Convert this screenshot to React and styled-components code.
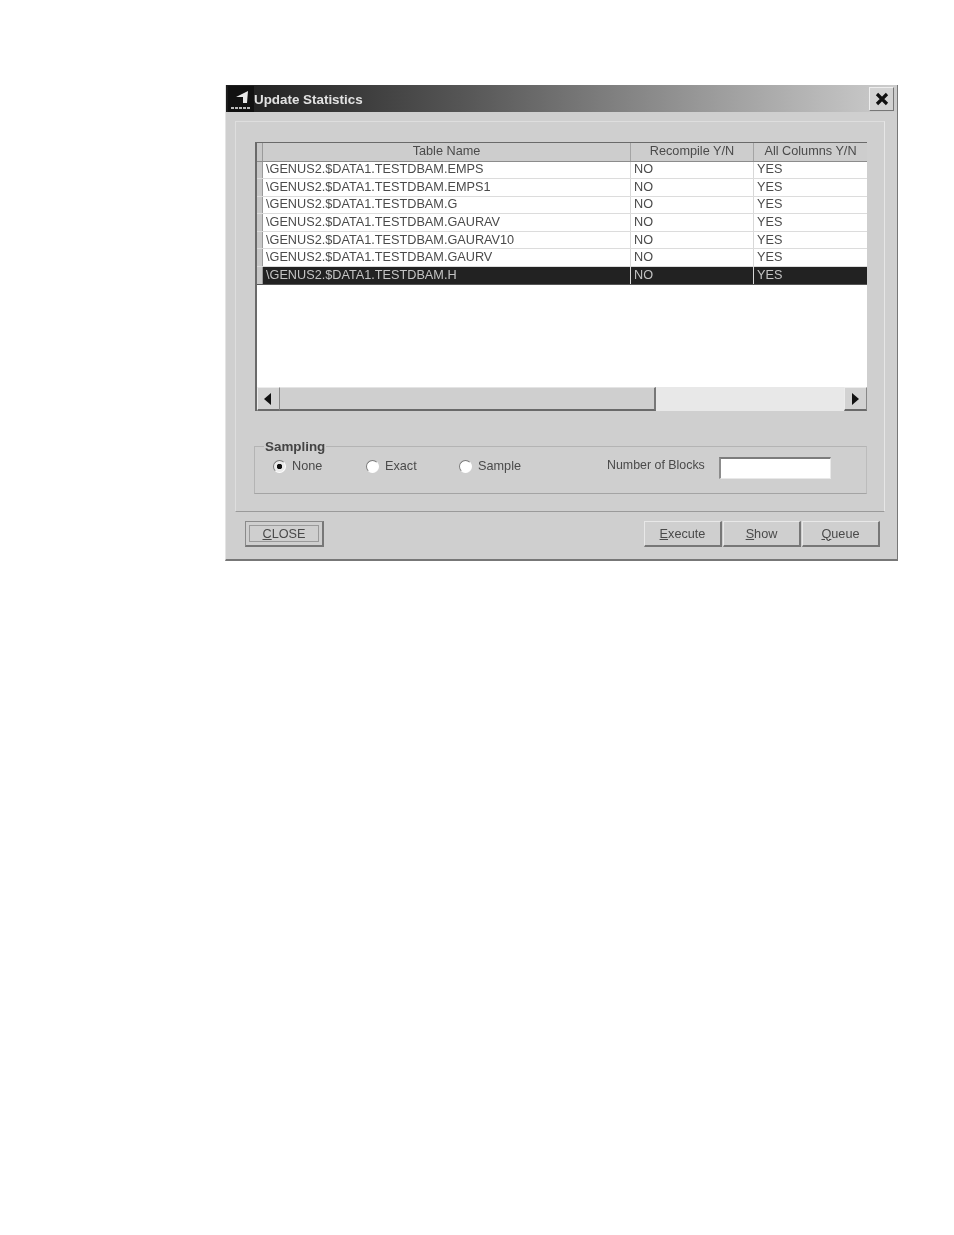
import React from "react";
import styled, {createGlobalStyle} from "styled-components";

const rows = ["EMPS", "EMPS1", "G", "GAURAV", "GAURAV10", "GAURV", "H"];

const App = () => {
  return (
    <>
      <GlobalStyle />
      <Window>
        <TitleBar>
          <Logo viewBox="0 0 26 26">
            <rect width="26" height="26" fill="#111" />
            <path d="M8 11 L20 5 L19 17 L15 17 L15 11 Z" fill="#e8e8e8" />
            <path d="M3 22 H23" stroke="#bbb" strokeWidth="2" strokeDasharray="3 1" />
          </Logo>
          <Title>Update Statistics</Title>
          <CloseBox aria-label="Close">
            <svg width="14" height="14" viewBox="0 0 14 14">
              <path d="M2 2 L12 12 M12 2 L2 12" stroke="#111" strokeWidth="3.2" />
            </svg>
          </CloseBox>
        </TitleBar>

        <Panel>
          <Grid>
            <HeaderRow>
              <Selector />
              <HeadCell>Table Name</HeadCell>
              <HeadCell>Recompile Y/N</HeadCell>
              <HeadCell>All Columns Y/N</HeadCell>
            </HeaderRow>
            {rows.map((name) => (
              <Row key={name} $selected={name === "H"}>
                <Selector />
                <Cell>{`\\GENUS2.$DATA1.TESTDBAM.${name}`}</Cell>
                <Cell>NO</Cell>
                <Cell>YES</Cell>
              </Row>
            ))}
            <Blank />
            <ScrollBar>
              <ScrollButton>
                <Arrow viewBox="0 0 8 12">
                  <path d="M7 0 V12 L0 6 Z" fill="#111" />
                </Arrow>
              </ScrollButton>
              <Thumb />
              <Track />
              <ScrollButton>
                <Arrow viewBox="0 0 8 12">
                  <path d="M1 0 V12 L8 6 Z" fill="#111" />
                </Arrow>
              </ScrollButton>
            </ScrollBar>
          </Grid>

          <Sampling>
            <Legend>Sampling</Legend>
            <Radio>
              <RadioDot $checked />
              None
            </Radio>
            <Radio>
              <RadioDot />
              Exact
            </Radio>
            <Radio $wide>
              <RadioDot />
              Sample
            </Radio>
            <BlocksLabel>Number of Blocks</BlocksLabel>
            <BlocksInput />
          </Sampling>
        </Panel>

        <Footer>
          <CloseButton>
            <CloseInner>
              <u>C</u>LOSE
            </CloseInner>
          </CloseButton>
          <ActionGroup>
            <ActionButton>
              <u>E</u>xecute
            </ActionButton>
            <ActionButton>
              <u>S</u>how
            </ActionButton>
            <ActionButton>
              <u>Q</u>ueue
            </ActionButton>
          </ActionGroup>
        </Footer>
      </Window>
    </>
  );
};
export default App;

const GlobalStyle = createGlobalStyle`
  * {
    box-sizing: border-box;
  }
  html, body {
    margin: 0;
    background: #fff;
  }
  body {
    padding: 85px 0 0 225px;
    height: 1235px;
    font-family: "Liberation Sans", Arial, sans-serif;
    font-size: 12.7px;
    color: #4a4a4a;
  }
`;

const Window = styled.div`
  width: 673px;
  height: 476px;
  background: #cfcfcf;
  border-right: 1px solid #777;
  border-bottom: 2px solid #777;
  border-left: 1px solid #e4e4e4;
  filter: blur(0.7px);
`;

const TitleBar = styled.div`
  height: 27px;
  display: flex;
  align-items: center;
  padding: 0 2px;
  background: linear-gradient(to right, #1c1c1c 0%, #555 35%, #a0a0a0 75%, #cdcdcd 100%);
`;

const Logo = styled.svg`
  width: 26px;
  height: 26px;
  flex: none;
`;

const Title = styled.span`
  flex: 1;
  padding-top: 2px;
  font-size: 13.4px;
  font-weight: 700;
  color: #e2e2e2;
`;

const CloseBox = styled.div`
  width: 25px;
  height: 24px;
  margin-right: 1px;
  display: flex;
  align-items: center;
  justify-content: center;
  background: #d2d2d2;
  border-top: 1px solid #eee;
  border-left: 1px solid #eee;
  border-right: 1px solid #777;
  border-bottom: 1px solid #777;
`;

const Panel = styled.div`
  width: 650px;
  height: 391px;
  margin: 9px 0 0 9px;
  padding: 20px 18px 0 19px;
  border: 1px solid #dedede;
  border-right-color: #e6e6e6;
  border-bottom-color: #9a9a9a;
`;

const Grid = styled.div`
  width: 612px;
  height: 269px;
  display: flex;
  flex-direction: column;
  background: #fff;
  border-top: 1px solid #6a6a6a;
  border-left: 2px solid #6a6a6a;
`;

const columns = "6px 368px 123px 1fr";

const HeaderRow = styled.div`
  display: grid;
  grid-template-columns: ${columns};
  height: 18.5px;
  flex: none;
  background: #cdcdcd;
  border-bottom: 1px solid #8c8c8c;
`;

const Selector = styled.div`
  background: #c8c8c8;
  border-right: 1px solid #9a9a9a;
`;

const HeadCell = styled.div`
  display: flex;
  align-items: center;
  justify-content: center;
  padding-bottom: 1px;
  border-right: 1px solid #a4a4a4;
  &:last-child {
    border-right: none;
  }
`;

const Row = styled.div`
  display: grid;
  grid-template-columns: ${columns};
  height: 17.6px;
  flex: none;
  background: ${(props) => (props.$selected ? "#222" : "#fff")};
  color: ${(props) => (props.$selected ? "#c4c4c4" : "#4a4a4a")};
  border-bottom: 1px solid ${(props) => (props.$selected ? "#555" : "#dcdcdc")};
`;

const Cell = styled.div`
  display: flex;
  align-items: center;
  padding: 0 0 1px 3px;
  white-space: nowrap;
  border-right: 1px solid #d8d8d8;
  &:last-child {
    border-right: none;
  }
`;

const Blank = styled.div`
  flex: 1;
`;

const ScrollBar = styled.div`
  height: 24px;
  flex: none;
  display: flex;
  background: #cfcfcf;
`;

const ScrollButton = styled.div`
  width: 23px;
  flex: none;
  display: flex;
  align-items: center;
  justify-content: center;
  padding-right: 2px;
  background: #d2d2d2;
  border-top: 1px solid #ececec;
  border-left: 1px solid #ececec;
  border-right: 1px solid #888;
  border-bottom: 2px solid #6a6a6a;
`;

const Arrow = styled.svg`
  width: 8px;
  height: 12px;
`;

const Thumb = styled.div`
  width: 376px;
  flex: none;
  background: #cfcfcf;
  border-top: 1px solid #e4e4e4;
  border-right: 2px solid #777;
  border-bottom: 2px solid #6a6a6a;
`;

const Track = styled.div`
  flex: 1;
  background: #e8e8e8;
`;

const Sampling = styled.fieldset`
  width: 613px;
  height: 55px;
  margin: 28px 0 0 -1px;
  padding: 0 0 0 18px;
  display: flex;
  align-items: center;
  border: 1px solid #b4b4b4;
  border-bottom-color: #a4a4a4;
  border-right-color: #bcbcbc;
`;

const Legend = styled.legend`
  margin-left: -9px;
  padding: 0 1px;
  font-size: 13.4px;
  font-weight: 700;
  color: #444;
`;

const Radio = styled.label`
  width: ${(props) => (props.$wide ? "148px" : "93px")};
  flex: none;
  display: flex;
  align-items: center;
  gap: 6px;
  height: 16px;
  margin-top: -15px;
`;

const RadioDot = styled.span`
  width: 13px;
  height: 13px;
  flex: none;
  border-radius: 50%;
  background: ${(props) =>
    props.$checked ? "radial-gradient(circle, #111 0 2.5px, #ececec 3px)" : "#fff"};
  border: 1px solid #7a7a7a;
  border-right-color: #fff;
  border-bottom-color: #fff;
`;

const BlocksLabel = styled.span`
  width: 112px;
  flex: none;
  margin-top: -17px;
  font-size: 12.4px;
  white-space: nowrap;
`;

const BlocksInput = styled.div`
  width: 112px;
  height: 22px;
  flex: none;
  margin-top: -12px;
  background: #fff;
  border-top: 2px solid #7c7c7c;
  border-left: 2px solid #8c8c8c;
  border-right: 1px solid #e8e8e8;
  border-bottom: 1px solid #e8e8e8;
`;

const Footer = styled.div`
  display: flex;
  justify-content: space-between;
  padding: 9px 17px 0 19px;
`;

const CloseButton = styled.div`
  width: 79px;
  height: 26px;
  padding: 3px;
  background: #cfcfcf;
  border: 1px solid #777;
  border-top-color: #8a8a8a;
  border-left-color: #8a8a8a;
  border-right-width: 2px;
  border-bottom-width: 2px;
`;

const CloseInner = styled.div`
  height: 100%;
  display: flex;
  align-items: center;
  justify-content: center;
  border: 1px solid #9a9a9a;
  white-space: pre;
`;

const ActionGroup = styled.div`
  display: flex;
  gap: 1px;
`;

const ActionButton = styled.div`
  width: 78px;
  height: 26px;
  display: flex;
  align-items: center;
  justify-content: center;
  background: #cfcfcf;
  border-top: 1px solid #e8e8e8;
  border-left: 1px solid #e8e8e8;
  border-right: 2px solid #777;
  border-bottom: 2px solid #777;
  white-space: pre;
`;
